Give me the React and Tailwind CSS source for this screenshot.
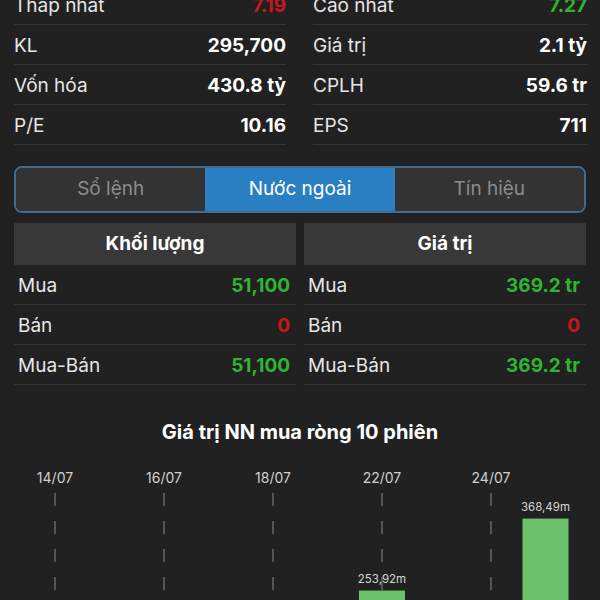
import React from 'react';

const topLeft = [
    { label: 'Thấp nhất', value: '7.19', color: 'text-[#c8161d]' },
    { label: 'KL', value: '295,700' },
    { label: 'Vốn hóa', value: '430.8 tỷ' },
    { label: 'P/E', value: '10.16' },
];

const topRight = [
    { label: 'Cao nhất', value: '7.27', color: 'text-[#2fb52f]' },
    { label: 'Giá trị', value: '2.1 tỷ' },
    { label: 'CPLH', value: '59.6 tr' },
    { label: 'EPS', value: '711' },
];

const volumeRows = [
    { label: 'Mua', value: '51,100', color: 'text-[#2fb52f]' },
    { label: 'Bán', value: '0', color: 'text-[#c8161d]' },
    { label: 'Mua-Bán', value: '51,100', color: 'text-[#2fb52f]' },
];

const valueRows = [
    { label: 'Mua', value: '369.2 tr', color: 'text-[#2fb52f]' },
    { label: 'Bán', value: '0', color: 'text-[#c8161d]' },
    { label: 'Mua-Bán', value: '369.2 tr', color: 'text-[#2fb52f]' },
];

const sessions = [
    { date: '14/07', value: 0 },
    { date: '15/07', value: 0 },
    { date: '16/07', value: 0 },
    { date: '17/07', value: 0 },
    { date: '18/07', value: 0 },
    { date: '21/07', value: 0 },
    { date: '22/07', value: 253.92 },
    { date: '23/07', value: 0 },
    { date: '24/07', value: 0 },
    { date: '25/07', value: 368.49 },
];

function StatRow({ label, value, color }) {
    return (
        <div className="h-[40px] pt-[4px] flex items-center justify-between border-b border-[#343434]">
            <span className="text-[19px] text-[#e6e6e6]">{label}</span>
            <span className={`text-[19px] font-bold ${color || 'text-white'}`}>{value}</span>
        </div>
    );
}

function FlowRow({ label, value, color }) {
    return (
        <div className="h-[40px] pt-[3px] flex items-center justify-between border-b border-[#343434] pl-[4px] pr-[6px]">
            <span className="text-[19px] text-[#e6e6e6]">{label}</span>
            <span className={`text-[19px] font-bold ${color}`}>{value}</span>
        </div>
    );
}

function Chart() {
    const slot = 54.5;
    const baseline = 290;
    const scale = 0.628;
    return (
        <svg width="600" height="145" viewBox="0 0 600 145" className="block">
            {sessions.map((s, i) => {
                const x = 55 + slot * i;
                const h = s.value * scale;
                return (
                    <g key={s.date}>
                        {s.value > 0 && (
                            <>
                                <rect x={x - 23} y={baseline - h} width="46" height={h} fill="#6cc16b" />
                                <text x={x} y={baseline - h - 11} textAnchor="middle" dominantBaseline="middle" fontSize="11.5" fill="#d6d6d6">
                                    {s.value.toFixed(2).replace('.', ',')}m
                                </text>
                            </>
                        )}
                        {i % 2 === 0 && (
                            <>
                                <text x={x} y="19" textAnchor="middle" dominantBaseline="middle" fontSize="14" fill="#d0d0d0">{s.date}</text>
                                <line x1={x} y1="33" x2={x} y2="145" stroke="#8a8a8a" strokeWidth="1" strokeDasharray="13 15" />
                            </>
                        )}
                    </g>
                );
            })}
        </svg>
    );
}

export default function App() {
    return (
        <div className="w-[600px] h-[600px] overflow-hidden bg-[#212121] font-['Inter',sans-serif]">
            <div className="-mt-[15px] flex gap-[27px] pl-[14px] pr-[13px]">
                <div className="w-[272px] flex flex-col">
                    {topLeft.map((r) => <StatRow key={r.label} {...r} />)}
                </div>
                <div className="flex-1 flex flex-col">
                    {topRight.map((r) => <StatRow key={r.label} {...r} />)}
                </div>
            </div>

            <div className="mt-[21px] mx-[14px] h-[47px] flex border-2 border-[#3d6e98] rounded-[8px] overflow-hidden">
                <div className="flex-1 flex items-center justify-center bg-[#333333] text-[19px] text-[#8c8c8c]">Sổ lệnh</div>
                <div className="flex-1 flex items-center justify-center bg-[#2a7fc2] text-[19px] text-white">Nước ngoài</div>
                <div className="flex-1 flex items-center justify-center bg-[#333333] text-[19px] text-[#8c8c8c]">Tín hiệu</div>
            </div>

            <div className="mt-[10px] mx-[14px] grid grid-cols-2 gap-x-[8px]">
                <div className="flex flex-col">
                    <div className="h-[42px] flex items-center justify-center bg-[#383838] text-[19px] font-bold text-white">Khối lượng</div>
                    {volumeRows.map((r) => <FlowRow key={r.label} {...r} />)}
                </div>
                <div className="flex flex-col">
                    <div className="h-[42px] flex items-center justify-center bg-[#383838] text-[19px] font-bold text-white">Giá trị</div>
                    {valueRows.map((r) => <FlowRow key={r.label} {...r} />)}
                </div>
            </div>

            <div className="mt-[35px] text-center text-[20px] font-bold text-white leading-[24px]">Giá trị NN mua ròng 10 phiên</div>

            <div className="mt-[16px]">
                <Chart />
            </div>
        </div>
    );
}
